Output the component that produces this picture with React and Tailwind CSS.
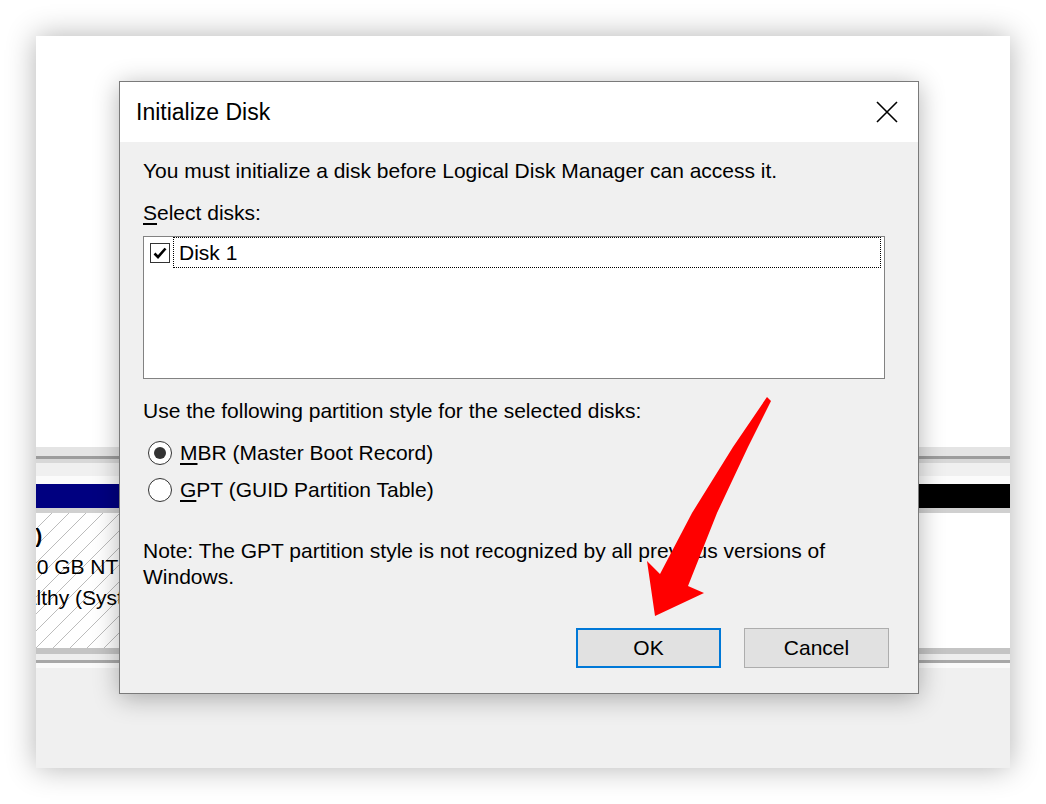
const CheckBox = () => (
  <div className="w-[20px] h-[20px] border border-[#333333] bg-white flex items-center justify-center shrink-0">
    <svg width="16" height="16" viewBox="0 0 16 16">
      <path d="M2.5 8.5 L6 12 L13.5 3.5" fill="none" stroke="#000" strokeWidth="2.6" />
    </svg>
  </div>
);

const Radio = ({ checked }) => (
  <div className="w-[24px] h-[24px] rounded-full border border-[#333333] bg-white flex items-center justify-center shrink-0">
    {checked && <div className="w-[12px] h-[12px] rounded-full bg-[#333333]" />}
  </div>
);

const Dialog = () => (
  <div className="absolute left-[83px] top-[45px] w-[800px] h-[613px] flex flex-col border border-[#7a7a7a] bg-[#f0f0f0] shadow-[0_4px_24px_rgba(0,0,0,0.3)]">
    {/* Title bar */}
    <div className="h-[60px] bg-white flex items-center justify-between pl-[16px] pr-[20px]">
      <span className="text-[23px] text-black">Initialize Disk</span>
      <svg width="22" height="22" viewBox="0 0 22 22">
        <path d="M1 1 L21 21 M21 1 L1 21" stroke="#000" strokeWidth="1.6" />
      </svg>
    </div>

    {/* Body */}
    <div className="flex-1 flex flex-col pl-[23px] pr-[33px] pt-[16px] text-[21px] leading-[26px] text-black">
      <p>You must initialize a disk before Logical Disk Manager can access it.</p>
      <p className="mt-[16px]">
        <span className="underline underline-offset-[3px]">S</span>elect disks:
      </p>

      <div className="mt-[10px] h-[143px] border border-[#828282] bg-white">
        <div className="flex items-center h-[31px]">
          <div className="ml-[6px]">
            <CheckBox />
          </div>
          <div className="ml-[3px] mr-[3px] flex-1 h-full flex items-center pl-[5px] border border-dotted border-black">
            Disk 1
          </div>
        </div>
      </div>

      <p className="mt-[19px]">Use the following partition style for the selected disks:</p>

      <div className="mt-[10px] flex flex-col">
        <div className="h-[37px] flex items-center pl-[5px] gap-[8px]">
          <Radio checked />
          <span>
            <span className="underline underline-offset-[3px]">M</span>BR (Master Boot Record)
          </span>
        </div>
        <div className="h-[37px] flex items-center pl-[5px] gap-[8px]">
          <Radio />
          <span>
            <span className="underline underline-offset-[3px]">G</span>PT (GUID Partition Table)
          </span>
        </div>
      </div>

      <p className="mt-[30px]">
        Note: The GPT partition style is not recognized by all previous versions of Windows.
      </p>

      <div className="mt-auto mb-[25px] mr-[-4px] flex justify-end gap-[23px]">
        <button className="w-[145px] h-[40px] border-2 border-[#0078d7] bg-[#e1e1e1] text-[21px]">
          OK
        </button>
        <button className="w-[145px] h-[40px] border border-[#adadad] bg-[#e1e1e1] text-[21px]">
          Cancel
        </button>
      </div>
    </div>
  </div>
);

export default function App() {
  return (
    <div className="relative w-[1046px] h-[804px] bg-white p-[36px] font-['Liberation_Sans',Arial,sans-serif]">
      {/* Disk Management window */}
      <div className="relative w-[974px] h-[732px] flex flex-col overflow-hidden bg-white shadow-[0_0_28px_rgba(0,0,0,0.3)]">
        <div className="h-[411px] bg-white" />

        {/* Strips above disk row */}
        <div className="h-[9px] bg-[#e4e4e4]" />
        <div className="h-[3px] bg-[#9c9c9c]" />
        <div className="h-[4px] bg-[#d8d8d8]" />
        <div className="h-[13px] bg-[#f0f0f0]" />
        <div className="h-[8px] bg-[#fbfbfb]" />

        {/* Partition headers */}
        <div className="h-[24px] flex">
          <div className="w-[460px] bg-[#000080]" />
          <div className="flex-1 bg-black" />
        </div>
        <div className="h-[5px] bg-[#d0d0d0]" />

        {/* Partitions */}
        <div className="h-[135px] flex">
          <div className="w-[460px] pt-[7px] text-[21px] leading-[31px] text-black whitespace-nowrap overflow-hidden bg-[repeating-linear-gradient(135deg,#ffffff_0px,#ffffff_11px,#bcbcbc_11px,#bcbcbc_12px)]">
            <div className="ml-[-30px] font-bold">(C:)</div>
            <div className="ml-[-11px]">60 GB NTFS</div>
            <div className="ml-[-38px]">Healthy (System, Boot, Page File, Active, Crash Dump)</div>
          </div>
          <div className="flex-1 bg-white" />
        </div>

        {/* Strips below disk row */}
        <div className="h-[6px] bg-[#c4c4c4]" />
        <div className="h-[6px] bg-[#eeeeee]" />
        <div className="h-[3px] bg-[#a8a8a8]" />
        <div className="h-[5px] bg-[#fafafa]" />
        <div className="flex-1 bg-[#f0f0f0]" />

        <Dialog />
      </div>

      {/* Red annotation arrow */}
      <svg className="absolute left-0 top-0 pointer-events-none" width="1046" height="804" viewBox="0 0 1046 804">
        <polygon
          points="767,397 771,401 748,447 717,513 688,586 704,593 655,616 647,561 660,574 692,513 733,447"
          fill="#ff0000"
        />
      </svg>
    </div>
  );
}
